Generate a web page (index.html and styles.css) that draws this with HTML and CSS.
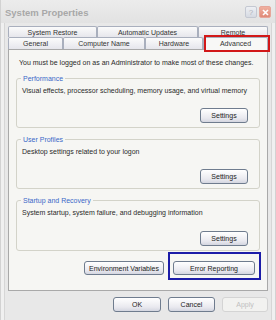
FILE: index.html
```html
<!DOCTYPE html>
<html>
<head>
<meta charset="utf-8">
<link rel="stylesheet" href="styles.css">
</head>
<body>
<div class="window">
  <div class="titlebar">
    <span class="title">System Properties</span>
    <div class="tb-buttons">
      <span class="tb-btn help">?</span>
      <span class="tb-btn close"><svg width="7" height="7" viewBox="0 0 7 7"><path d="M1 1L6 6M6 1L1 6" stroke="#fff" stroke-width="1.6"/></svg></span>
    </div>
  </div>
  <div class="tabs">
    <div class="tabrow row1">
      <div class="tab w89">System Restore</div>
      <div class="tab w101">Automatic Updates</div>
      <div class="tab w70">Remote</div>
    </div>
    <div class="tabrow row2">
      <div class="tab w55">General</div>
      <div class="tab w82">Computer Name</div>
      <div class="tab w58">Hardware</div>
      <div class="tab w65 active">Advanced</div>
    </div>
    <div class="mark red"></div>
  </div>
  <div class="panel">
    <p class="notice">You must be logged on as an Administrator to make most of these changes.</p>
    <div class="group">
      <span class="legend">Performance</span>
      <p class="desc">Visual effects, processor scheduling, memory usage, and virtual memory</p>
      <button class="btn settings">Settings</button>
    </div>
    <div class="group">
      <span class="legend">User Profiles</span>
      <p class="desc">Desktop settings related to your logon</p>
      <button class="btn settings">Settings</button>
    </div>
    <div class="group g3">
      <span class="legend">Startup and Recovery</span>
      <p class="desc">System startup, system failure, and debugging information</p>
      <button class="btn settings">Settings</button>
    </div>
    <div class="envrow">
      <button class="btn env">Environment Variables</button>
      <button class="btn err">Error Reporting</button>
      <div class="mark blue"></div>
    </div>
  </div>
  <div class="footer">
    <button class="btn ok">OK</button>
    <button class="btn cancel">Cancel</button>
    <button class="btn apply" disabled>Apply</button>
  </div>
</div>
</body>
</html>
```
FILE: styles.css
```css
* { box-sizing: border-box; }
html, body { margin: 0; padding: 0; }
body {
  width: 276px;
  height: 320px;
  overflow: hidden;
  font-family: "Liberation Sans", Arial, sans-serif;
  font-size: 7px;
  color: #2a2a2a;
  background: #e9e9e9;
}
.window {
  width: 276px;
  height: 320px;
  background: #e8e8e8;
  border-left: 1px solid #d2d2d2;
  border-right: 1px solid #d2d2d2;
  box-shadow: inset 3px 0 0 #f0f0f0, inset -3px 0 0 #f0f0f0, inset 4px 0 0 #d6d6d6, inset -4px 0 0 #d6d6d6;
}
.titlebar {
  height: 23px;
  display: flex;
  align-items: center;
  justify-content: space-between;
  padding: 0 4px 0 4px;
  background: linear-gradient(#ececec, #e2e2e2);
}
.title {
  font-weight: bold;
  font-size: 9.5px;
  color: #a8a8a8;
  letter-spacing: 0;
  margin-top: 1px;
}
.tb-buttons { display: flex; gap: 2px; margin-top: 1px; }
.tb-btn {
  width: 12px;
  height: 12px;
  border-radius: 2px;
  display: flex;
  align-items: center;
  justify-content: center;
  font-size: 8px;
}
.help {
  background: linear-gradient(#eef0f4, #d6dae2);
  border: 1px solid #c4c8d2;
  color: #b0b4bc;
}
.close {
  background: linear-gradient(#f0b0a0, #e08a78);
  border: 1px solid #e6a69a;
}
.tabs {
  position: relative;
  margin: 3px 7px 0 7px;
}
.tabrow { display: flex; }
.row1 { height: 11px; }
.row2 { height: 12px; }
.tab {
  display: flex;
  align-items: center;
  justify-content: center;
  background: linear-gradient(#fbfbfb, #e6e6ec);
  border: 1px solid #a9afbd;
  border-bottom: none;
  border-radius: 2px 2px 0 0;
  color: #333;
  font-size: 7px;
}
.row2 .tab { margin-top: 0; }
.tab.active {
  background: #f8f8f6;
  border-color: #a9afbd;
  align-items: flex-start;
  padding-top: 2px;
  height: 13px;
  position: relative;
  z-index: 2;
}
.w89 { width: 89px; }
.w101 { width: 101px; }
.w70 { width: 70px; }
.w55 { width: 55px; }
.w82 { width: 82px; }
.w58 { width: 58px; }
.w65 { width: 65px; }
.mark { position: absolute; pointer-events: none; }
.mark.red {
  left: 196px;
  top: 9px;
  width: 66px;
  height: 17px;
  border: 2px solid #d21818;
  z-index: 3;
}
.panel {
  margin: 0 7px;
  height: 242px;
  background: #f6f6f3;
  border: 1px solid #a9a9a9;
  padding: 0 7px 0 7px;
}
.notice {
  margin: 8px 0 0 3px;
  line-height: 9px;
}
.group {
  position: relative;
  height: 50px;
  margin-top: 11px;
  border: 1px solid #d3d3c9;
  border-radius: 3px;
  padding: 7px 11px 4px 5px;
  display: flex;
  flex-direction: column;
}
.group:first-of-type { margin-top: 11px; }
.group.g3 { height: 51px; }
.legend {
  position: absolute;
  left: 4px;
  top: -5px;
  padding: 0 2px;
  background: #f6f6f3;
  color: #3a68c8;
  line-height: 9px;
}
.desc { margin: 0; line-height: 9px; }
.btn {
  font-family: "Liberation Sans", Arial, sans-serif;
  font-size: 7px;
  color: #222;
  height: 15px;
  padding: 0;
  border: 1px solid #6f7c8e;
  border-radius: 3px;
  background: linear-gradient(#ffffff, #e9e9ef 70%, #d4d6e0);
}
.settings {
  width: 48px;
  margin-top: auto;
  align-self: flex-end;
}
.envrow {
  position: relative;
  display: flex;
  justify-content: flex-end;
  gap: 9px;
  margin-top: 10px;
  padding-right: 5px;
}
.envrow .btn { height: 14px; }
.env { width: 80px; }
.err { width: 82px; }
.mark.blue {
  left: 152px;
  top: -9px;
  width: 93px;
  height: 28px;
  border: 2px solid #1c1ca8;
}
.footer {
  display: flex;
  justify-content: flex-end;
  gap: 7px;
  padding: 6px 7px 0 0;
}
.footer .btn { height: 15px; }
.ok { width: 48px; }
.cancel { width: 47px; }
.apply {
  width: 46px;
  color: #c0c0c0;
  border-color: #d4d4d4;
  background: #f2f2f0;
}
```
